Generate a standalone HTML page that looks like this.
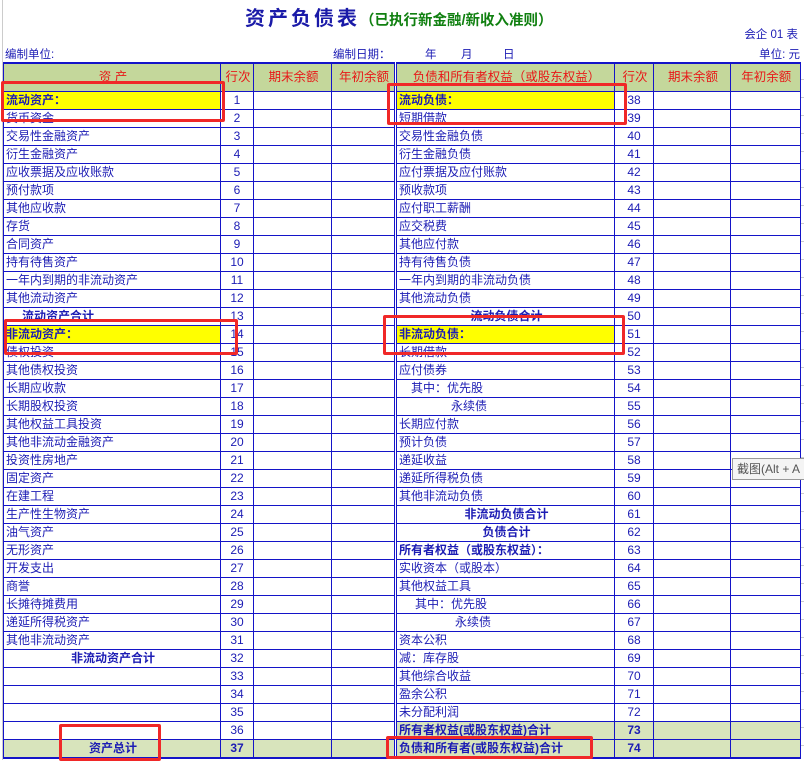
<!DOCTYPE html>
<html><head><meta charset="utf-8">
<style>
body{margin:0;width:804px;height:760px;background:#fff;position:relative;overflow:hidden;font-family:"Liberation Sans","Noto Sans CJK SC",sans-serif;color:#1c1cb4;font-size:12px}
.a{position:absolute;white-space:nowrap}
table{position:absolute;left:3px;top:62px;border-collapse:collapse;table-layout:fixed}
td{border:1px solid #1414c8;height:17px;padding:0 0 0 2px;font-size:12px;line-height:17px;white-space:nowrap;overflow:hidden;color:#1c1cb4}
td.n{text-align:center;padding:0}
tr.h td{height:27px;background:#c4d79b;color:#e81818;text-align:center;font-size:12.5px;border-top:2px solid #1414c8;border-bottom:1px solid #1414c8}
.y{background:#ffff00;font-weight:bold}
.b{font-weight:bold}
.g td{background:#d8e4bc}
.mid{border-left:3px double #1414c8}
.re{border-right:2px solid #1414c8}
.c{text-align:center}
.red{position:absolute;border:3px solid #f02828;border-radius:2px}
.grid{position:absolute;left:801px;top:62px;width:3px;height:698px;background:repeating-linear-gradient(#fff 0 17px,#ccc 17px 18px)}
</style></head><body>
<div class="a" style="left:245px;top:2px;font-size:20px;font-weight:bold;color:#1a1aa8;letter-spacing:3px">资产负债表<span style="font-size:14.5px;color:#108010;letter-spacing:0">（已执行新金融/新收入准则）</span></div>
<div class="a" style="right:6px;top:26px;font-size:11.5px">会企 01 表</div>
<div class="a" style="left:5px;top:46px;font-size:11.5px">编制单位:</div>
<div class="a" style="left:333px;top:46px;font-size:11.5px">编制日期：</div>
<div class="a" style="left:425px;top:46px;font-size:11.5px">年</div>
<div class="a" style="left:461px;top:46px;font-size:11.5px">月</div>
<div class="a" style="left:503px;top:46px;font-size:11.5px">日</div>
<div class="a" style="right:4px;top:46px;font-size:11.5px">单位: 元</div>
<div style="position:absolute;left:2px;top:0;width:1px;height:760px;background:#ccc"></div>
<table>
<colgroup><col style="width:217px"><col style="width:33px"><col style="width:78px"><col style="width:64px"><col style="width:219px"><col style="width:39px"><col style="width:77px"><col style="width:70px"></colgroup>
<tr class="h"><td>资 产</td><td>行次</td><td>期末余额</td><td>年初余额</td><td class="mid">负债和所有者权益（或股东权益）</td><td>行次</td><td>期末余额</td><td class="re">年初余额</td></tr>
<tr><td class="y">流动资产：</td><td class="n">1</td><td></td><td></td><td class="mid y">流动负债：</td><td class="n">38</td><td></td><td class="re"></td></tr>
<tr><td>货币资金</td><td class="n">2</td><td></td><td></td><td class="mid">短期借款</td><td class="n">39</td><td></td><td class="re"></td></tr>
<tr><td>交易性金融资产</td><td class="n">3</td><td></td><td></td><td class="mid">交易性金融负债</td><td class="n">40</td><td></td><td class="re"></td></tr>
<tr><td>衍生金融资产</td><td class="n">4</td><td></td><td></td><td class="mid">衍生金融负债</td><td class="n">41</td><td></td><td class="re"></td></tr>
<tr><td>应收票据及应收账款</td><td class="n">5</td><td></td><td></td><td class="mid">应付票据及应付账款</td><td class="n">42</td><td></td><td class="re"></td></tr>
<tr><td>预付款项</td><td class="n">6</td><td></td><td></td><td class="mid">预收款项</td><td class="n">43</td><td></td><td class="re"></td></tr>
<tr><td>其他应收款</td><td class="n">7</td><td></td><td></td><td class="mid">应付职工薪酬</td><td class="n">44</td><td></td><td class="re"></td></tr>
<tr><td>存货</td><td class="n">8</td><td></td><td></td><td class="mid">应交税费</td><td class="n">45</td><td></td><td class="re"></td></tr>
<tr><td>合同资产</td><td class="n">9</td><td></td><td></td><td class="mid">其他应付款</td><td class="n">46</td><td></td><td class="re"></td></tr>
<tr><td>持有待售资产</td><td class="n">10</td><td></td><td></td><td class="mid">持有待售负债</td><td class="n">47</td><td></td><td class="re"></td></tr>
<tr><td>一年内到期的非流动资产</td><td class="n">11</td><td></td><td></td><td class="mid">一年内到期的非流动负债</td><td class="n">48</td><td></td><td class="re"></td></tr>
<tr><td>其他流动资产</td><td class="n">12</td><td></td><td></td><td class="mid">其他流动负债</td><td class="n">49</td><td></td><td class="re"></td></tr>
<tr><td class="b" style="padding-left:18px">流动资产合计</td><td class="n">13</td><td></td><td></td><td class="mid b c">流动负债合计</td><td class="n">50</td><td></td><td class="re"></td></tr>
<tr><td class="y">非流动资产：</td><td class="n">14</td><td></td><td></td><td class="mid y">非流动负债：</td><td class="n">51</td><td></td><td class="re"></td></tr>
<tr><td>债权投资</td><td class="n">15</td><td></td><td></td><td class="mid">长期借款</td><td class="n">52</td><td></td><td class="re"></td></tr>
<tr><td>其他债权投资</td><td class="n">16</td><td></td><td></td><td class="mid">应付债券</td><td class="n">53</td><td></td><td class="re"></td></tr>
<tr><td>长期应收款</td><td class="n">17</td><td></td><td></td><td class="mid" style="padding-left:14px">其中：优先股</td><td class="n">54</td><td></td><td class="re"></td></tr>
<tr><td>长期股权投资</td><td class="n">18</td><td></td><td></td><td class="mid" style="padding-left:54px">永续债</td><td class="n">55</td><td></td><td class="re"></td></tr>
<tr><td>其他权益工具投资</td><td class="n">19</td><td></td><td></td><td class="mid">长期应付款</td><td class="n">56</td><td></td><td class="re"></td></tr>
<tr><td>其他非流动金融资产</td><td class="n">20</td><td></td><td></td><td class="mid">预计负债</td><td class="n">57</td><td></td><td class="re"></td></tr>
<tr><td>投资性房地产</td><td class="n">21</td><td></td><td></td><td class="mid">递延收益</td><td class="n">58</td><td></td><td class="re"></td></tr>
<tr><td>固定资产</td><td class="n">22</td><td></td><td></td><td class="mid">递延所得税负债</td><td class="n">59</td><td></td><td class="re"></td></tr>
<tr><td>在建工程</td><td class="n">23</td><td></td><td></td><td class="mid">其他非流动负债</td><td class="n">60</td><td></td><td class="re"></td></tr>
<tr><td>生产性生物资产</td><td class="n">24</td><td></td><td></td><td class="mid b c">非流动负债合计</td><td class="n">61</td><td></td><td class="re"></td></tr>
<tr><td>油气资产</td><td class="n">25</td><td></td><td></td><td class="mid b c">负债合计</td><td class="n">62</td><td></td><td class="re"></td></tr>
<tr><td>无形资产</td><td class="n">26</td><td></td><td></td><td class="mid b">所有者权益（或股东权益）：</td><td class="n">63</td><td></td><td class="re"></td></tr>
<tr><td>开发支出</td><td class="n">27</td><td></td><td></td><td class="mid">实收资本（或股本）</td><td class="n">64</td><td></td><td class="re"></td></tr>
<tr><td>商誉</td><td class="n">28</td><td></td><td></td><td class="mid">其他权益工具</td><td class="n">65</td><td></td><td class="re"></td></tr>
<tr><td>长摊待摊费用</td><td class="n">29</td><td></td><td></td><td class="mid" style="padding-left:18px">其中：优先股</td><td class="n">66</td><td></td><td class="re"></td></tr>
<tr><td>递延所得税资产</td><td class="n">30</td><td></td><td></td><td class="mid" style="padding-left:58px">永续债</td><td class="n">67</td><td></td><td class="re"></td></tr>
<tr><td>其他非流动资产</td><td class="n">31</td><td></td><td></td><td class="mid">资本公积</td><td class="n">68</td><td></td><td class="re"></td></tr>
<tr><td class="b c">非流动资产合计</td><td class="n">32</td><td></td><td></td><td class="mid">减：库存股</td><td class="n">69</td><td></td><td class="re"></td></tr>
<tr><td></td><td class="n">33</td><td></td><td></td><td class="mid">其他综合收益</td><td class="n">70</td><td></td><td class="re"></td></tr>
<tr><td></td><td class="n">34</td><td></td><td></td><td class="mid">盈余公积</td><td class="n">71</td><td></td><td class="re"></td></tr>
<tr><td></td><td class="n">35</td><td></td><td></td><td class="mid">未分配利润</td><td class="n">72</td><td></td><td class="re"></td></tr>
<tr><td></td><td class="n">36</td><td></td><td></td><td class="mid b" style="background:#d8e4bc">所有者权益(或股东权益)合计</td><td class="n b" style="background:#d8e4bc">73</td><td style="background:#d8e4bc"></td><td class="re" style="background:#d8e4bc"></td></tr>
<tr class="g"><td class="b c" style="border-bottom:2px solid #1414c8">资产总计</td><td class="n b" style="border-bottom:2px solid #1414c8">37</td><td style="border-bottom:2px solid #1414c8"></td><td style="border-bottom:2px solid #1414c8"></td><td class="mid b" style="border-bottom:2px solid #1414c8">负债和所有者(或股东权益)合计</td><td class="n b" style="border-bottom:2px solid #1414c8">74</td><td style="border-bottom:2px solid #1414c8"></td><td class="re" style="border-bottom:2px solid #1414c8"></td></tr>
</table>
<div class="grid"></div>
<div class="a" style="left:732px;top:458px;width:80px;height:20px;background:#f4f4f4;border:1px solid #999;color:#555;font-size:12px;line-height:20px;padding-left:4px">截图(Alt + A</div>
<div class="red" style="left:1px;top:81px;width:218px;height:35px"></div>
<div class="red" style="left:387px;top:83px;width:234px;height:36px"></div>
<div class="red" style="left:4px;top:319px;width:228px;height:30px"></div>
<div class="red" style="left:383px;top:315px;width:236px;height:34px"></div>
<div class="red" style="left:59px;top:724px;width:96px;height:31px"></div>
<div class="red" style="left:386px;top:736px;width:201px;height:17px"></div>
</body></html>
